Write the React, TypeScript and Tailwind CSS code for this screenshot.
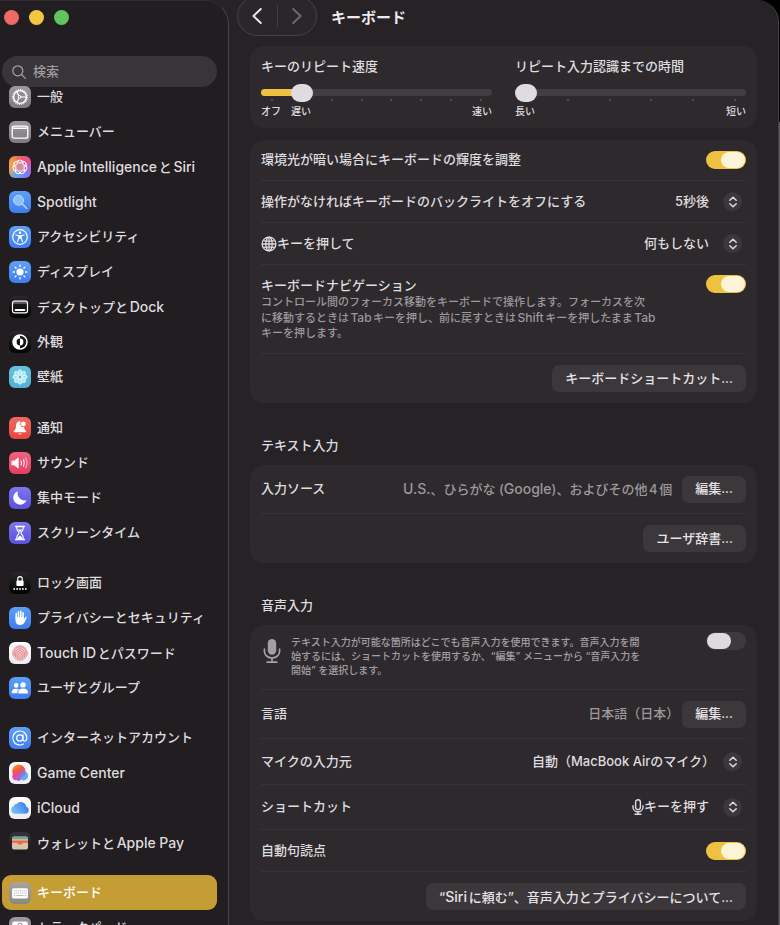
import { useState, type ReactNode } from "react";
import { clsx } from "clsx";

interface SidebarItem {
  label: string;
  icon: ReactNode;
  tile: string;
}

const GRAY_TILE = "bg-linear-to-b from-[#9c9a9f] to-[#7d7b81]";
const BLUE_TILE = "bg-linear-to-b from-[#5ea0f6] to-[#3d7df0]";
const BLACK_TILE = "bg-linear-to-b from-[#29272a] to-[#050505]";
const INDIGO_TILE = "bg-linear-to-b from-[#7d77ee] to-[#5a50e0]";
const WHITE_TILE = "bg-linear-to-b from-white to-[#ececee]";

const spokes = (count: number, offset = 0) =>
  Array.from({ length: count }, (_, i) => offset + (i * 360) / count);

// Latin runs are set a step larger than the kana around them
function Mixed({ text }: { text: string }) {
  return (
    <span>
      {text.split(/([A-Za-z][A-Za-z. ]*[A-Za-z.])/).map((part, i) =>
        i % 2 ? <span key={i} className="text-[14px]">{part}</span> : part
      )}
    </span>
  );
}

function Glyph({ children }: { children: ReactNode }) {
  return (
    <svg viewBox="0 0 22 22" className="size-full" fill="none" stroke="white" strokeLinecap="round" strokeLinejoin="round" aria-hidden="true">
      {children}
    </svg>
  );
}

const GearIcon = (
  <Glyph>
    <circle cx="11" cy="11" r="7.4" strokeWidth="1.1" strokeDasharray="0.9 1.03" strokeLinecap="butt" />
    <circle cx="11" cy="11" r="6.4" strokeWidth="1.4" />
    <circle cx="10.6" cy="11" r="1.4" strokeWidth="1" />
    <path d="M12.2 11H17.3M9.8 9.6L7.7 5.7M9.8 12.4L7.7 16.3" strokeWidth="1.2" />
  </Glyph>
);

const MenuBarIcon = (
  <Glyph>
    <rect x="3.2" y="5.2" width="15.6" height="12" rx="2" strokeWidth="1.3" />
    <path d="M3.6 7.3H18.4" strokeWidth="1.4" strokeLinecap="butt" />
  </Glyph>
);

const IntelligenceIcon = (
  <Glyph>
    {spokes(7).map((a) => (
      <circle key={a} cx="11" cy="7" r="3" strokeWidth="1" transform={`rotate(${a} 11 11)`} />
    ))}
    <circle cx="11" cy="11" r="4.2" fill="#cf8f9f" stroke="#f6d8de" strokeWidth="0.9" />
  </Glyph>
);

const SpotlightIcon = (
  <Glyph>
    <circle cx="9.6" cy="9.3" r="5" fill="#8fc0f8" stroke="#b9d9fb" strokeWidth="1" />
    <path d="M13.4 13.1L17.6 17.3" stroke="#b9d9fb" strokeWidth="1.5" />
  </Glyph>
);

const AccessibilityIcon = (
  <Glyph>
    <circle cx="11" cy="11" r="7.3" strokeWidth="1.2" />
    <circle cx="11" cy="6.7" r="1.2" fill="white" stroke="none" />
    <path d="M6.9 9L9.8 9.7V12L8.5 15.7M15.1 9L12.2 9.7V12L13.5 15.7M9.8 9.7H12.2M9.8 12H12.2" strokeWidth="1.1" />
    <path d="M9.8 9.5H12.2V12.5H9.8Z" fill="white" stroke="none" />
  </Glyph>
);

const DisplayIcon = (
  <Glyph>
    <circle cx="11" cy="11" r="3.6" fill="white" stroke="none" />
    {spokes(8).map((a) => (
      <path key={a} d="M11 4.1V5.4" strokeWidth="1.4" transform={`rotate(${a} 11 11)`} />
    ))}
  </Glyph>
);

const DockIcon = (
  <Glyph>
    <rect x="3.5" y="5.2" width="15" height="11.6" rx="2" strokeWidth="1.2" />
    <path d="M4 7H18" strokeWidth="0.9" strokeOpacity="0.6" />
    <path d="M6.6 14H15.4" strokeWidth="1.9" />
  </Glyph>
);

const AppearanceIcon = (
  <Glyph>
    <circle cx="11" cy="11" r="7" strokeWidth="1.5" />
    <path d="M11 4A7 7 0 0 0 11 18V14.4A3.4 3.4 0 0 1 11 7.6Z" fill="white" stroke="none" />
    <path d="M11 7.6A3.4 3.4 0 0 1 11 14.4Z" fill="white" stroke="none" />
  </Glyph>
);

const WallpaperIcon = (
  <Glyph>
    {spokes(8).map((a) => (
      <ellipse key={a} cx="11" cy="6.3" rx="1.9" ry="2.5" fill="#a9e4f5" stroke="#e3f8fd" strokeWidth="0.9" transform={`rotate(${a} 11 11)`} />
    ))}
    <circle cx="11" cy="11" r="1.9" fill="#5ab9d8" stroke="#e3f8fd" strokeWidth="0.9" />
  </Glyph>
);

const NotificationIcon = (
  <Glyph>
    <path d="M11 4.2C8.3 4.2 7.1 6.2 7 8.8C6.9 11.8 6.2 12.8 5 14C4.5 14.6 4.8 15.2 5.5 15.2H16.5C17.2 15.2 17.5 14.6 17 14C16.2 13.2 15.5 12.3 15.2 10.4" fill="white" stroke="none" />
    <path d="M9.2 16.4A1.9 1.6 0 0 0 12.8 16.4Z" fill="white" stroke="none" />
    <circle cx="14.4" cy="7" r="3.1" fill="#ea5750" stroke="none" />
    <circle cx="14.4" cy="7" r="2.4" fill="white" stroke="none" />
  </Glyph>
);

const SoundIcon = (
  <Glyph>
    <path d="M3.2 9H5.4L9.2 5.9V16.1L5.4 13H3.2Z" fill="white" strokeWidth="0.8" />
    <path d="M12 9.1Q13.1 11 12 12.9" strokeWidth="1.1" />
    <path d="M14.3 7.6Q16.3 11 14.3 14.4" strokeWidth="1.1" strokeOpacity="0.8" />
    <path d="M16.6 6.2Q19.5 11 16.6 15.8" strokeWidth="1.1" strokeOpacity="0.6" />
  </Glyph>
);

const FocusIcon = (
  <Glyph>
    <path d="M9 4.2A6.9 6.9 0 1 0 17.6 13.3A7.1 7.1 0 0 1 9 4.2Z" fill="white" stroke="none" />
  </Glyph>
);

const ScreenTimeIcon = (
  <Glyph>
    <path d="M6.6 4.4H15.4M6.6 17.6H15.4" strokeWidth="1.5" />
    <path d="M7.8 4.8V6.6C7.8 8.8 10 9.6 10 11C10 12.4 7.8 13.2 7.8 15.4V17.2M14.2 4.8V6.6C14.2 8.8 12 9.6 12 11C12 12.4 14.2 13.2 14.2 15.4V17.2" strokeWidth="1.1" />
    <path d="M8.7 7.5H13.3L11 10.2ZM8.4 17V15.8L11 13.4L13.6 15.8V17Z" fill="white" stroke="none" />
  </Glyph>
);

const LockScreenIcon = (
  <Glyph>
    <path d="M8.8 9V6.8A2.2 2.2 0 0 1 13.2 6.8V9" strokeWidth="1.2" />
    <rect x="7.4" y="8.6" width="7.2" height="5.4" rx="1" fill="white" stroke="none" />
    {[5.2, 8.1, 11, 13.9, 16.8].map((x) => (
      <circle key={x} cx={x} cy="17" r="0.9" fill="white" stroke="none" />
    ))}
  </Glyph>
);

const PrivacyIcon = (
  <Glyph>
    <path d="M7.3 11.5V6.6M9.5 10V4.8M11.8 10V4.4M14.1 10.5V5.8" strokeWidth="1.6" />
    <path d="M6.5 10H14.9V12.2L16.2 10.2C16.8 9.4 18 9.9 17.6 10.9L15.7 15.1C14.8 17 13.3 18 11 18C8.2 18 6.5 16.2 6.5 13.2Z" fill="white" stroke="none" />
  </Glyph>
);

const TouchIdIcon = (
  <Glyph>
    <circle cx="11" cy="11" r="7.4" fill="#f3cfd1" stroke="#e79a9f" strokeWidth="0.8" />
    <g stroke="#e2787f" strokeWidth="0.8">
      <path d="M5.2 13.5C4 7.5 8 4.8 11 4.8C15 4.8 18 8 17 13.5" />
      <path d="M6.8 15.2C5.6 10 7.6 6.7 11 6.7C14.5 6.7 16.4 10 15.2 15.4" />
      <path d="M8.5 16.5C7.2 11.5 8.3 8.6 11 8.6C13.8 8.6 14.6 11.5 13.3 16.8" />
      <path d="M10.3 17.2C9.5 13.4 9.4 10.5 11 10.5C12.6 10.5 12.4 13.6 11.6 17.2" />
    </g>
  </Glyph>
);

const UsersIcon = (
  <Glyph>
    <g fill="white" stroke="none">
      <circle cx="7.2" cy="8.4" r="2.3" />
      <path d="M2.6 15.8C2.6 13 4.4 11.7 7 11.7C8.2 11.7 9.2 12 9.9 12.6C8.8 13.5 8.3 14.6 8.3 16.2H3Z" />
      <circle cx="14" cy="7.9" r="2.7" />
      <path d="M9.2 15.6C9.2 12.9 11.2 11.5 14 11.5C16.9 11.5 19 12.9 19 15.6C19 16.2 18.7 16.5 18.2 16.5H10C9.5 16.5 9.2 16.2 9.2 15.6Z" />
    </g>
  </Glyph>
);

const InternetIcon = (
  <Glyph>
    <circle cx="10.8" cy="11" r="3.1" strokeWidth="1.3" />
    <path d="M14 7.8V12.2C14 15 17.8 14.6 17.8 10.9A7 7 0 1 0 14.4 17" strokeWidth="1.2" />
  </Glyph>
);

const GameCenterIcon = (
  <Glyph>
    <defs>
      <linearGradient id="gcWarm" x1="0" y1="0" x2="0.5" y2="1">
        <stop offset="0" stopColor="#f9a62b" />
        <stop offset="0.5" stopColor="#f1564b" />
        <stop offset="1" stopColor="#e2489c" />
      </linearGradient>
      <linearGradient id="gcCool" x1="0" y1="0" x2="1" y2="1">
        <stop offset="0" stopColor="#8f66e8" />
        <stop offset="1" stopColor="#30b6f0" />
      </linearGradient>
    </defs>
    <g stroke="none">
      <circle cx="7" cy="14.6" r="3.7" fill="#e24ac2" />
      <circle cx="9.8" cy="9.2" r="6.6" fill="url(#gcWarm)" />
      <circle cx="14.4" cy="13.8" r="4.7" fill="url(#gcCool)" fillOpacity="0.85" />
      <circle cx="9.6" cy="17" r="2" fill="#a55be6" />
    </g>
  </Glyph>
);

const CloudIcon = (
  <Glyph>
    <defs>
      <linearGradient id="cloud" x1="0" y1="0.7" x2="1" y2="0.3">
        <stop offset="0" stopColor="#7cc4f6" />
        <stop offset="1" stopColor="#3579ea" />
      </linearGradient>
    </defs>
    <path d="M5.6 16.8A3.9 3.9 0 0 1 4.6 9.3A3 3 0 0 1 7.6 7A5.5 5.5 0 0 1 17.2 9.8A3.6 3.6 0 0 1 16.6 16.8Z" fill="url(#cloud)" stroke="none" />
  </Glyph>
);

const WalletIcon = (
  <Glyph>
    <g stroke="none">
      <rect x="3" y="4.6" width="16" height="12.8" rx="2" fill="#d9c3ae" />
      <path d="M3 7.2V6.4C3 5.4 3.8 4.8 4.8 4.8H17.2C18.2 4.8 19 5.4 19 6.4V7.2Z" fill="#5da9c9" />
      <path d="M3 7H19V9H3Z" fill="#eab54c" />
      <path d="M3 8.8H19V10.8H3Z" fill="#e0664f" />
      <path d="M7.6 10.6H14.4C13.8 11 13.3 12.6 11 12.6C8.7 12.6 8.2 11 7.6 10.6Z" fill="#e0664f" />
    </g>
  </Glyph>
);

const KeyboardIcon = (
  <Glyph>
    <rect x="3" y="6.2" width="16" height="10.2" rx="1.6" fill="white" stroke="none" />
    <g stroke="#b5b2b0" strokeWidth="1" strokeLinecap="butt">
      <path d="M4.8 8.7H17.4M4.8 11H17.4" strokeDasharray="1.1 0.85" />
      <path d="M4.8 13.6H6.2M7.4 13.6H14.6M15.8 13.6H17.4" />
    </g>
  </Glyph>
);

const TrackpadIcon = (
  <Glyph>
    <rect x="3.2" y="4.6" width="15.6" height="13" rx="2" fill="white" stroke="none" />
    <circle cx="11" cy="8" r="2" stroke="#8d8b90" strokeWidth="1" />
  </Glyph>
);

const GROUPS: SidebarItem[][] = [
  [
    { label: "一般", icon: GearIcon, tile: GRAY_TILE },
    { label: "メニューバー", icon: MenuBarIcon, tile: GRAY_TILE },
    { label: "Apple IntelligenceとSiri", icon: IntelligenceIcon, tile: "bg-[conic-gradient(#ec5f6c,#e4508a,#a866d8,#7a84ee,#5fa8f0,#eda05c,#f59a48,#ec5f6c)]" },
    { label: "Spotlight", icon: SpotlightIcon, tile: BLUE_TILE },
    { label: "アクセシビリティ", icon: AccessibilityIcon, tile: BLUE_TILE },
    { label: "ディスプレイ", icon: DisplayIcon, tile: BLUE_TILE },
    { label: "デスクトップとDock", icon: DockIcon, tile: BLACK_TILE },
    { label: "外観", icon: AppearanceIcon, tile: BLACK_TILE },
    { label: "壁紙", icon: WallpaperIcon, tile: "bg-linear-to-b from-[#62c4de] to-[#52b0d4]" },
  ],
  [
    { label: "通知", icon: NotificationIcon, tile: "bg-linear-to-b from-[#ee6a62] to-[#e8453f]" },
    { label: "サウンド", icon: SoundIcon, tile: "bg-linear-to-b from-[#ed6280] to-[#e53e5f]" },
    { label: "集中モード", icon: FocusIcon, tile: INDIGO_TILE },
    { label: "スクリーンタイム", icon: ScreenTimeIcon, tile: INDIGO_TILE },
  ],
  [
    { label: "ロック画面", icon: LockScreenIcon, tile: BLACK_TILE },
    { label: "プライバシーとセキュリティ", icon: PrivacyIcon, tile: BLUE_TILE },
    { label: "Touch IDとパスワード", icon: TouchIdIcon, tile: WHITE_TILE },
    { label: "ユーザとグループ", icon: UsersIcon, tile: BLUE_TILE },
  ],
  [
    { label: "インターネットアカウント", icon: InternetIcon, tile: BLUE_TILE },
    { label: "Game Center", icon: GameCenterIcon, tile: WHITE_TILE },
    { label: "iCloud", icon: CloudIcon, tile: WHITE_TILE },
    { label: "ウォレットとApple Pay", icon: WalletIcon, tile: "bg-linear-to-b from-[#353335] to-[#1b1a1b]" },
  ],
  [
    { label: "キーボード", icon: KeyboardIcon, tile: "bg-linear-to-b from-[#a8a39b] to-[#8a8680]" },
    { label: "トラックパッド", icon: TrackpadIcon, tile: GRAY_TILE },
  ],
];

function Sidebar() {
  const [selected, setSelected] = useState("キーボード");

  return (
    <aside className="flex w-[229px] flex-shrink-0 flex-col overflow-hidden rounded-tr-3xl border-t border-r border-t-[#302c30] border-r-[#454145] bg-[#211d21]">
      {/* Window buttons */}
      <div className="flex gap-[10px] px-1 pt-[9px]">
        <button aria-label="閉じる" className="size-[15px] rounded-full bg-[#ed6a66]" />
        <button aria-label="しまう" className="size-[15px] rounded-full bg-[#f2c73f]" />
        <button aria-label="拡大" className="size-[15px] rounded-full bg-[#5fc65f]" />
      </div>

      {/* Search */}
      <label className="mt-[31px] mr-[11px] ml-[2px] flex h-[31px] flex-shrink-0 items-center gap-[7px] rounded-full bg-[#383438] px-[10px]">
        <svg viewBox="0 0 14 14" className="size-[14px] flex-shrink-0" fill="none" stroke="#a7a3a7" strokeWidth="1.2" strokeLinecap="round" aria-hidden="true">
          <circle cx="5.8" cy="5.8" r="5" />
          <path d="M9.5 9.5L13.3 13.3" />
        </svg>
        <input type="text" aria-label="検索" placeholder="検索" className="w-full min-w-0 bg-transparent text-[13px] outline-none placeholder:text-[#a09ca0]" />
      </label>

      <nav className="relative -mt-2 flex flex-col gap-[15px] pr-[11px] pl-[2px]">
        {GROUPS.map((group) => (
          <ul key={group[0].label} className="first:pb-px">
            {group.map((item) => (
              <li key={item.label}>
                <button
                  onClick={() => setSelected(item.label)}
                  className={clsx(
                    "flex h-[35px] w-full items-center gap-[6px] rounded-[9px] px-[7px] text-left text-[13px] whitespace-nowrap",
                    selected === item.label ? "bg-[#c59d35] text-white" : "text-[#dfdcdf]"
                  )}
                >
                  <span className={clsx("size-[22px] flex-shrink-0 overflow-hidden rounded-[6px]", item.tile)}>{item.icon}</span>
                  <Mixed text={item.label} />
                </button>
              </li>
            ))}
          </ul>
        ))}
      </nav>
    </aside>
  );
}

function Card({ children }: { children: ReactNode }) {
  return <div className="divide-y divide-[#373337] rounded-[14px] bg-[#2d292d] px-[11px]">{children}</div>;
}

function Row({ children, className = "h-[42px]" }: { children: ReactNode; className?: string }) {
  return <div className={clsx("flex items-center", className)}>{children}</div>;
}

function Toggle({ id, defaultChecked = false }: { id: string; defaultChecked?: boolean }) {
  return (
    <input
      id={id}
      type="checkbox"
      role="switch"
      defaultChecked={defaultChecked}
      className="ml-auto flex h-[18px] w-10 flex-shrink-0 appearance-none items-center rounded-full bg-[#3d393d] p-px before:h-4 before:w-6 before:rounded-full before:bg-[#dedbde] checked:justify-end checked:bg-[#efc140] checked:before:bg-[#fdf3d6]"
    />
  );
}

function PushButton({ label, className }: { label: string; className?: string }) {
  return (
    <button className={clsx("h-[27px] flex-shrink-0 rounded-[7px] bg-[#3b373b] px-[13px] text-[#e6e3e6]", className)}>
      <Mixed text={label} />
    </button>
  );
}

interface PopUpProps {
  id: string;
  options: string[];
  icon?: ReactNode;
  inset?: string;
}

function PopUp({ id, options, icon, inset = "pr-[37px]" }: PopUpProps) {
  return (
    <div className="relative ml-auto flex items-center">
      {icon}
      <select id={id} className={clsx("field-sizing-content appearance-none bg-transparent text-right outline-none", inset)}>
        {options.map((option) => (
          <option key={option}>{option}</option>
        ))}
      </select>
      <span className="pointer-events-none absolute right-1 flex size-[19px] items-center justify-center rounded-full bg-[#3b373b]">
        <svg viewBox="0 0 10 12" className="h-3 w-[10px]" fill="none" stroke="#e0dde0" strokeWidth="1.5" strokeLinecap="round" strokeLinejoin="round" aria-hidden="true">
          <path d="M1.8 4.2L5 1.2L8.2 4.2M1.8 7.8L5 10.8L8.2 7.8" />
        </svg>
      </span>
    </div>
  );
}

interface SliderProps {
  id: string;
  label: string;
  steps: number;
  initial: number;
  children: ReactNode;
}

function Slider({ id, label, steps, initial, children }: SliderProps) {
  const [value, setValue] = useState(initial);
  const fill = (value / steps) * 100;

  return (
    <div className="min-w-0 flex-1">
      <label htmlFor={id} className="block leading-5">{label}</label>
      <input
        id={id}
        type="range"
        min={0}
        max={steps}
        value={value}
        onChange={(e) => setValue(Number(e.target.value))}
        style={{ backgroundImage: `linear-gradient(to right, #efc140 ${fill}%, #413d41 ${fill}%)` }}
        className="mt-[13px] block h-[7px] w-full appearance-none rounded-full [&::-webkit-slider-thumb]:h-[18px] [&::-webkit-slider-thumb]:w-[22px] [&::-webkit-slider-thumb]:appearance-none [&::-webkit-slider-thumb]:rounded-full [&::-webkit-slider-thumb]:bg-[#dfdcdf]"
      />
      <div className="mt-[3px] flex justify-between px-[10px]">
        {Array.from({ length: steps + 1 }, (_, i) => (
          <span key={i} className={clsx("size-[2px] rounded-full", i === value ? "bg-transparent" : "bg-[#5d595d]")} />
        ))}
      </div>
      <div className="mt-[2px] flex text-[10px] leading-4">{children}</div>
    </div>
  );
}

const GlobeIcon = (
  <svg viewBox="0 0 16 16" className="size-4 flex-shrink-0" fill="none" stroke="#dfdcdf" strokeWidth="1.3" aria-hidden="true">
    <circle cx="8" cy="8" r="6.9" />
    <ellipse cx="8" cy="8" rx="3.2" ry="6.9" />
    <path d="M8 1V15M1 8H15M2.3 4.6Q8 5.8 13.7 4.6M2.3 11.4Q8 10.2 13.7 11.4" />
  </svg>
);

const MicIcon = (
  <svg viewBox="0 0 12 16" className="h-4 w-3 flex-shrink-0" fill="none" stroke="#dfdcdf" strokeWidth="1.4" strokeLinecap="round" aria-hidden="true">
    <rect x="3.6" y="0.8" width="4.8" height="9.8" rx="2.4" />
    <path d="M1 6.8V8.2A5 4.6 0 0 0 11 8.2V6.8M6 12.8V15.2M3 15.2H9" />
  </svg>
);

const DictationIcon = (
  <svg viewBox="0 0 18 26" className="mt-[6px] h-[26px] w-[18px] flex-shrink-0" fill="none" stroke="#a39fa3" strokeWidth="1.7" strokeLinecap="round" aria-hidden="true">
    <rect x="4.8" y="1" width="8.4" height="15.8" rx="4.2" fill="#a39fa3" stroke="none" />
    <path d="M1.4 11.2V13.2A7.6 6.8 0 0 0 16.6 13.2V11.2M9 19.8V24M4.2 24.2H13.8" />
  </svg>
);

function Toolbar() {
  return (
    <header className="flex h-[37px] items-center">
      <div className="-mt-[5px] -ml-[13px] flex h-10 w-20 flex-shrink-0 items-center rounded-full border border-[#454145] bg-[#2a262a]">
        <button aria-label="戻る" className="flex flex-1 justify-center">
          <svg viewBox="0 0 10 16" className="h-4 w-[10px]" fill="none" stroke="#eceaec" strokeWidth="1.9" strokeLinecap="round" strokeLinejoin="round" aria-hidden="true">
            <path d="M8.8 1L1.4 8L8.8 15" />
          </svg>
        </button>
        <span className="h-[22px] w-px bg-[#413d41]" />
        <button aria-label="進む" className="flex flex-1 justify-center">
          <svg viewBox="0 0 10 16" className="h-4 w-[10px]" fill="none" stroke="#6d696d" strokeWidth="1.9" strokeLinecap="round" strokeLinejoin="round" aria-hidden="true">
            <path d="M1.2 1L8.6 8L1.2 15" />
          </svg>
        </button>
      </div>
      <h1 className="ml-[14px] text-[15px] font-bold text-[#eceaec]">キーボード</h1>
    </header>
  );
}

export default function App() {
  return (
    <div className="flex h-screen overflow-hidden bg-black font-['Inter','Noto_Sans_CJK_JP',sans-serif] text-[13px] font-medium text-[#dfdcdf] [text-autospace:normal]">
      <div className="flex min-w-0 flex-1 overflow-hidden rounded-tr-[22px] border-r border-[#454145] bg-[#262226]">
        <Sidebar />

        <main className="min-w-0 flex-1 overflow-hidden px-[21px]">
          <Toolbar />

          <div className="mt-[9px]">
            <Card>
              <div className="flex h-[82px] gap-[23px] pt-[10px]">
                <Slider id="repeat-rate" label="キーのリピート速度" steps={7} initial={1}>
                  <span>オフ</span>
                  <span className="ml-[10px]">遅い</span>
                  <span className="ml-auto">速い</span>
                </Slider>
                <Slider id="repeat-delay" label="リピート入力認識までの時間" steps={5} initial={0}>
                  <span>長い</span>
                  <span className="ml-auto">短い</span>
                </Slider>
              </div>
            </Card>
          </div>

          <div className="mt-3">
            <Card>
              <Row className="h-[41px]">
                <label htmlFor="brightness">環境光が暗い場合にキーボードの輝度を調整</label>
                <Toggle id="brightness" defaultChecked />
              </Row>
              <Row>
                <label htmlFor="backlight">操作がなければキーボードのバックライトをオフにする</label>
                <PopUp id="backlight" options={["5秒後", "10秒後", "30秒後", "1分後", "しない"]} />
              </Row>
              <Row>
                <label htmlFor="globe" className="flex items-center">{GlobeIcon}キーを押して</label>
                <PopUp id="globe" options={["何もしない", "入力ソースを変更", "絵文字と記号を表示"]} />
              </Row>
              <Row className="h-[89px] items-start pt-[10px]">
                <div>
                  <label htmlFor="navigation" className="block leading-5">キーボードナビゲーション</label>
                  <p className="text-[11px] leading-[15px] whitespace-nowrap text-[#9c989c]">
                    コントロール間のフォーカス移動をキーボードで操作します。フォーカスを次
                    <br />
                    に移動するときは<span className="text-[12px]">Tab</span>キーを押し、前に戻すときは<span className="text-[12px]">Shift</span>キーを押したまま<span className="text-[12px]">Tab</span>
                    <br />
                    キーを押します。
                  </p>
                </div>
                <Toggle id="navigation" defaultChecked />
              </Row>
              <Row className="h-[49px]">
                <PushButton className="ml-auto" label="キーボードショートカット..." />
              </Row>
            </Card>
          </div>

          <h2 className="mt-8 px-[11px] leading-5">テキスト入力</h2>
          <div className="mt-[10px]">
            <Card>
              <Row className="h-[49px]">
                <span>入力ソース</span>
                <span className="ml-auto text-[#9c989c]">
                  <Mixed text="U.S.、ひらがな (Google)、およびその他4個" />
                </span>
                <PushButton className="ml-[10px]" label="編集..." />
              </Row>
              <Row className="h-[49px]">
                <PushButton className="ml-auto" label="ユーザ辞書..." />
              </Row>
            </Card>
          </div>

          <h2 className="mt-8 px-[11px] leading-5">音声入力</h2>
          <div className="mt-[10px]">
            <Card>
              <Row className="h-[65px] items-start pt-[7px] pl-[2px]">
                {DictationIcon}
                <label htmlFor="dictation" className="mt-[3px] ml-[10px] text-[10px] leading-[14px] whitespace-nowrap text-[#a39fa3]">
                  テキスト入力が可能な箇所はどこでも音声入力を使用できます。音声入力を開
                  <br />
                  始するには、ショートカットを使用するか、“編集” メニューから “音声入力を
                  <br />
                  開始” を選択します。
                </label>
                <Toggle id="dictation" />
              </Row>
              <Row className="h-[49px]">
                <span>言語</span>
                <span className="ml-auto text-[#9c989c]">日本語（日本）</span>
                <PushButton className="ml-[3px]" label="編集..." />
              </Row>
              <Row className="h-[46px]">
                <label htmlFor="mic">マイクの入力元</label>
                <PopUp id="mic" inset="pr-[31px]" options={["自動（MacBook Airのマイク）", "MacBook Airのマイク"]} />
              </Row>
              <Row className="h-[45px]">
                <label htmlFor="shortcut">ショートカット</label>
                <PopUp id="shortcut" icon={MicIcon} options={["キーを押す", "Controlキーを2回押す"]} />
              </Row>
              <Row className="h-[42px]">
                <label htmlFor="punctuation">自動句読点</label>
                <Toggle id="punctuation" defaultChecked />
              </Row>
              <Row className="h-[49px]">
                <PushButton className="ml-auto" label="“Siriに頼む”、音声入力とプライバシーについて..." />
              </Row>
            </Card>
          </div>
        </main>
      </div>

      {/* Window behind, showing past the right edge */}
      <div className="flex w-px flex-col pt-[122px]">
        <div className="flex-1 bg-[#5a565a]" />
      </div>
    </div>
  );
}
